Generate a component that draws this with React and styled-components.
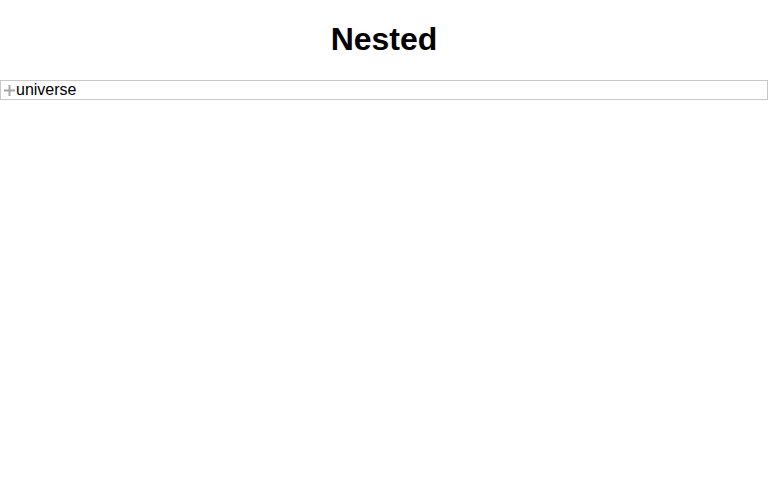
import React from "react";
import styled, { createGlobalStyle } from "styled-components";

const Global = createGlobalStyle`
  html, body { margin: 0; padding: 0; background: #fff; }
  body { font-family: "Liberation Sans", Arial, sans-serif; color: #000; }
`;

const Title = styled.h1`
  margin: 21px 0 22px;
  font-size: 32px;
  font-weight: bold;
  line-height: 37px;
  text-align: center;
`;

const Tree = styled.ul`
  list-style: none;
  margin: 0;
  padding: 0;
`;

const Node = styled.li`
  display: flex;
  align-items: center;
  height: 18px;
  border: 1px solid #c8c8c8;
  font-size: 16px;
  line-height: 18px;
  padding: 0 0 0 3px;
`;

const Toggle = styled.span`
  display: inline-flex;
  width: 11px;
  height: 11px;
  margin-right: 1px;
`;

const Label = styled.span`
  white-space: nowrap;
`;

const Plus = () => (
  <svg width="11" height="11" viewBox="0 0 11 11">
    <rect x="0" y="4.5" width="11" height="2" fill="#a8a8a8" />
    <rect x="4.5" y="0" width="2" height="11" fill="#a8a8a8" />
  </svg>
);

export default function App() {
  return (
    <>
      <Global />
      <Title>Nested</Title>
      <Tree>
        <Node>
          <Toggle>
            <Plus />
          </Toggle>
          <Label>universe</Label>
        </Node>
      </Tree>
    </>
  );
}
